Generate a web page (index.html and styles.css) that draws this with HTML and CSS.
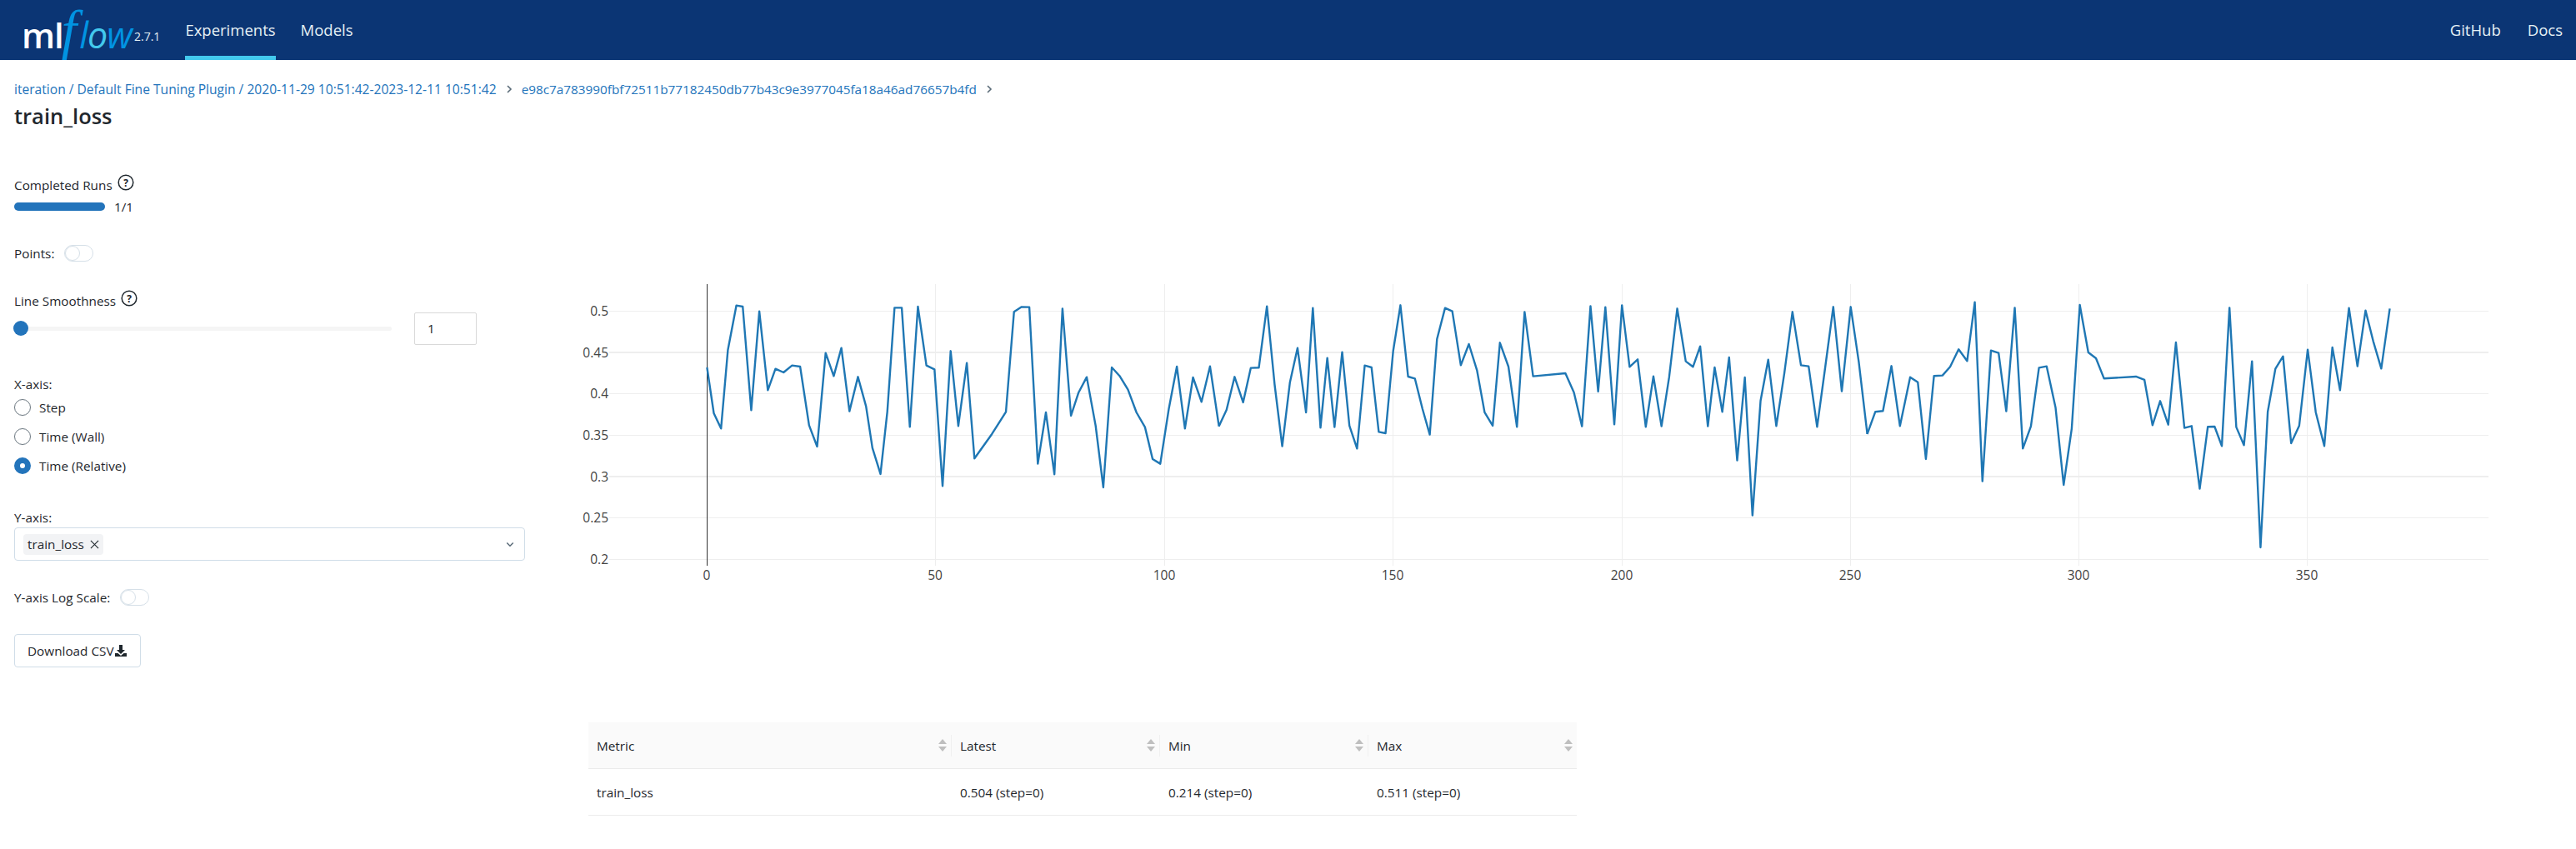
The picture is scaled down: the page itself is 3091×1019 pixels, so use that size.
FILE: index.html
```html
<!DOCTYPE html>
<html>
<head>
  <title>train_loss - MLflow</title>
  <link rel="stylesheet" href="styles.css">
</head>
<body>
  <header class="topbar">
    <a class="logo"><span class="logo-ml">ml</span><span class="logo-f">f</span><span class="logo-flow">l<span class="logo-o">o</span>w</span></a>
    <span class="version">2.7.1</span>
    <nav class="nav-main">
      <a class="nav-link active">Experiments</a>
      <a class="nav-link">Models</a>
    </nav>
    <nav class="nav-right">
      <a class="nav-link">GitHub</a>
      <a class="nav-link">Docs</a>
    </nav>
  </header>

  <main class="page">
    <div class="breadcrumb">
      <a class="crumb-long">iteration / Default Fine Tuning Plugin / 2020-11-29 10:51:42-2023-12-11 10:51:42</a>
      <svg class="crumb-sep" viewBox="0 0 8 12"><path d="M2 2l4 4-4 4" /></svg>
      <a>e98c7a783990fbf72511b77182450db77b43c9e3977045fa18a46ad76657b4fd</a>
      <svg class="crumb-sep" viewBox="0 0 8 12"><path d="M2 2l4 4-4 4" /></svg>
    </div>
    <h1 class="title">train_loss</h1>

    <div class="content">
      <aside class="controls">
        <div class="control control-runs">
          <div class="label-row">Completed Runs
            <svg class="help" viewBox="0 0 20 20"><circle cx="10" cy="10" r="8.8" /><text x="10" y="14.5">?</text></svg>
          </div>
          <div class="progress-row">
            <div class="progress"><div class="progress-fill"></div></div>
            <span>1/1</span>
          </div>
        </div>

        <div class="control control-points">
          <span>Points:</span>
          <span class="toggle"></span>
        </div>

        <div class="control control-smooth">
          <div class="label-row">Line Smoothness
            <svg class="help" viewBox="0 0 20 20"><circle cx="10" cy="10" r="8.8" /><text x="10" y="14.5">?</text></svg>
          </div>
          <div class="slider-row">
            <div class="slider"><span class="slider-thumb"></span></div>
            <div class="number-input">1</div>
          </div>
        </div>

        <div class="control control-xaxis">
          <div class="label-row">X-axis:</div>
          <div class="radio-group">
            <label class="radio"><span class="radio-dot"></span>Step</label>
            <label class="radio"><span class="radio-dot"></span>Time (Wall)</label>
            <label class="radio"><span class="radio-dot checked"></span>Time (Relative)</label>
          </div>
        </div>

        <div class="control control-yaxis">
          <div class="label-row">Y-axis:</div>
          <div class="select">
            <span class="tag">train_loss
              <svg class="tag-close" viewBox="0 0 12 12"><path d="M1 1l10 10M11 1L1 11" /></svg>
            </span>
            <svg class="chevron" viewBox="0 0 12 8"><path d="M1.5 1.5L6 6l4.5-4.5" /></svg>
          </div>
        </div>

        <div class="control control-log">
          <span>Y-axis Log Scale:</span>
          <span class="toggle"></span>
        </div>

        <button class="btn-download">Download CSV<svg class="download-icon" viewBox="0 0 16 16"><path d="M6 1h4v6h3l-5 5-5-5h3z" /><path d="M1 11h3.5l3.5 3 3.5-3H15v4H1z" /></svg></button>
      </aside>

      <section class="results">
        <svg class="chart" viewBox="690 330 2316 380">
          <g class="grid">
            <line x1="731" x2="2986" y1="372" y2="372" />
            <line class="thick" x1="731" x2="2986" y1="422" y2="422" />
            <line x1="731" x2="2986" y1="471" y2="471" />
            <line x1="731" x2="2986" y1="521" y2="521" />
            <line class="thick" x1="731" x2="2986" y1="571" y2="571" />
            <line x1="731" x2="2986" y1="620" y2="620" />
            <line x1="731" x2="2986" y1="670" y2="670" />
            <line x1="1122" x2="1122" y1="340" y2="678" />
            <line x1="1397" x2="1397" y1="340" y2="678" />
            <line x1="1671" x2="1671" y1="340" y2="678" />
            <line x1="1946" x2="1946" y1="340" y2="678" />
            <line x1="2220" x2="2220" y1="340" y2="678" />
            <line x1="2494" x2="2494" y1="340" y2="678" />
            <line x1="2768" x2="2768" y1="340" y2="678" />
          </g>
          <line class="zero" x1="848.5" x2="848.5" y1="340" y2="678" />
          <g class="tick-y">
            <text x="730" y="372">0.5</text>
            <text x="730" y="422">0.45</text>
            <text x="730" y="471">0.4</text>
            <text x="730" y="521">0.35</text>
            <text x="730" y="571">0.3</text>
            <text x="730" y="620">0.25</text>
            <text x="730" y="670">0.2</text>
          </g>
          <g class="tick-x">
            <text x="848" y="689">0</text>
            <text x="1122" y="689">50</text>
            <text x="1397" y="689">100</text>
            <text x="1671" y="689">150</text>
            <text x="1946" y="689">200</text>
            <text x="2220" y="689">250</text>
            <text x="2494" y="689">300</text>
            <text x="2768" y="689">350</text>
          </g>
          <!-- traced from the plot, one group per stretch of the x axis -->
          <polyline class="trace" transform="translate(680 320) scale(0.5102 0.3333)" points="330,360 346,525 363,580 379,298 399,137 414,141 434,514 453,158 473,442 491,365 510,378 530,353 549,357 570,568 589,645 609,308 628,391 646,290 665,518 685,394 704,500 719,650 738,744 754,520 771,145 788,145 807,574 826,141 846,353 865,367 884,787 903,301 921,571 941,344 959,688 1000,600 1033,520 1052,160 1070,142 1088,143 1108,707 1127,522 1147,745 1166,148 1186,534 1204,450 1223,395 1244,570 1262,792 1282,360 1300,390 1320,440 1340,522 1360,575 1378,690 1396,707 1416,510 1435,357 1454,580 1473,396 1493,484 1513,356 1534,572" />
          <polyline class="trace" transform="translate(1460 320) scale(0.5102 0.3333)" points="5,572 23,513 42,394 62,486 80,362 99,361 118,140 136,420 154,644 172,415 190,290 210,522 226,146 244,577 260,326 277,575 295,305 312,570 330,652 348,353 364,360 381,592 397,597 415,300 432,136 450,393 466,400 484,510 501,602 518,258 537,146 554,158 574,352 593,276 612,370 630,522 649,570 666,271 686,357 706,574 724,160 744,392 820,381 840,450 859,572 879,139 897,447 914,143 935,565 953,136 971,358 990,331 1009,574 1027,392 1046,572 1064,395 1083,148 1103,338 1120,358 1137,284 1155,572 1171,360 1189,520 1205,324 1224,695 1242,396 1260,893 1279,480 1297,332 1316,571 1335,380 1354,160 1374,352 1392,356 1412,574 1431,360 1450,142 1470,446 1491,142 1510,340 1530,600" />
          <polyline class="trace" transform="translate(2240 320) scale(0.5102 0.3333)" points="1,600 20,520 38,517 58,355 78,571 102,395 120,413 139,690 158,391 178,389 196,358 216,295 236,337 254,125 272,770 292,299 310,308 328,518 348,145 367,652 386,572 405,361 423,356 444,505 463,783 482,580 501,135 521,306 539,327 558,400 633,393 653,405 672,568 690,481 709,566 727,270 747,578 764,571 783,797 802,574 818,573 835,643 853,145 869,575 887,640 906,338 926,1008 943,520 961,365 979,320 998,633 1017,570 1037,296 1056,522 1076,643 1095,288 1113,442 1134,146 1154,356 1173,155 1191,265 1210,364 1230,148" />
        </svg>

        <table class="metrics">
          <thead>
            <tr>
              <th><span class="th-inner">Metric<span class="sorter"><i class="up"></i><i class="down"></i></span></span></th>
              <th><span class="th-inner">Latest<span class="sorter"><i class="up"></i><i class="down"></i></span></span></th>
              <th><span class="th-inner">Min<span class="sorter"><i class="up"></i><i class="down"></i></span></span></th>
              <th><span class="th-inner">Max<span class="sorter"><i class="up"></i><i class="down"></i></span></span></th>
            </tr>
          </thead>
          <tbody>
            <tr>
              <td>train_loss</td>
              <td>0.504 (step=0)</td>
              <td>0.214 (step=0)</td>
              <td>0.511 (step=0)</td>
            </tr>
          </tbody>
        </table>
      </section>
    </div>
  </main>
</body>
</html>
```

FILE: styles.css
```css
body {
  margin: 0;
  background-color: #fff;
  color: #1f272d;
  font-family: "Open Sans", "Noto Sans", sans-serif;
  font-size: 15.3px;
  overflow: hidden;
}

/* top bar */
.topbar {
  display: flex;
  align-items: center;
  height: 72px;
  padding: 0 16px 0 26px;
  background-color: #0b3574;
  color: #e6f1f5;
}

.logo {
  display: flex;
  align-items: baseline;
  width: 132px;
  height: 72px;
  line-height: 72px;
  overflow: visible;
}

.logo-ml {
  color: #fff;
  font-family: "Open Sans", sans-serif;
  font-size: 42px;
  font-weight: 600;
  letter-spacing: -1px;
}

.logo-f {
  color: #0194e2;
  font-family: "Liberation Serif", serif;
  font-size: 66px;
  font-style: italic;
  margin-left: -2px;
  margin-right: 3px;
}

.logo-flow {
  color: #0194e2;
  font-family: "Open Sans", sans-serif;
  font-size: 43px;
  font-style: italic;
  letter-spacing: -1px;
}

.logo-o {
  color: #43c9ed;
}

.version {
  margin: 14px 0 0 3px;
  font-size: 14px;
}

.nav-main {
  display: flex;
  gap: 30px;
  height: 72px;
  margin-left: 30px;
}

.nav-right {
  display: flex;
  gap: 32px;
  margin-left: auto;
}

.nav-link {
  display: block;
  font-size: 18.5px;
  line-height: 72px;
  height: 72px;
  box-sizing: border-box;
}

.nav-link.active {
  border-bottom: 5px solid #43c9ed;
}

/* page */
.page {
  padding: 24px 0 0 17px;
}

.breadcrumb {
  display: flex;
  align-items: center;
  gap: 11px;
  height: 22px;
  color: #2374bb;
}

.crumb-long {
  font-size: 15.6px;
}

.crumb-sep {
  width: 8px;
  height: 12px;
  fill: none;
  stroke: #5a6b78;
  stroke-width: 1.6;
}

.title {
  margin: 3px 0 0;
  font-size: 25.5px;
  font-weight: 600;
  line-height: 36px;
}

.content {
  display: flex;
  margin-top: 54px;
}

/* left column */
.controls {
  flex: none;
  width: 613px;
  margin-right: 60px;
}

.control {
  margin-bottom: 35px;
}

.control-smooth {
  margin-bottom: 36px;
}

.control-xaxis {
  margin-bottom: 34px;
}

.control-yaxis,
.control-log {
  margin-bottom: 33px;
}

.label-row {
  display: flex;
  align-items: center;
  gap: 6px;
  height: 22px;
}

.help {
  width: 20px;
  height: 20px;
  margin-top: -6px;
  fill: none;
  stroke: #1f272d;
  stroke-width: 1.5;
}

.help text {
  fill: #1f272d;
  stroke: none;
  font-size: 12px;
  font-weight: 700;
  text-anchor: middle;
}

.progress-row {
  display: flex;
  align-items: center;
  gap: 11px;
  margin-top: 5px;
}

.progress {
  width: 109px;
  height: 10px;
  border-radius: 5px;
  background-color: #eee;
}

.progress-fill {
  height: 100%;
  border-radius: 5px;
  background-color: #2374bb;
}

.control-points,
.control-log {
  display: flex;
  align-items: center;
  gap: 12px;
  height: 22px;
}

.toggle {
  position: relative;
  display: block;
  width: 33px;
  height: 18px;
  border: 1px solid #d6e0e8;
  border-radius: 10px;
}

.toggle::before {
  content: "";
  position: absolute;
  top: 0;
  left: 0;
  width: 18px;
  height: 18px;
  box-sizing: border-box;
  border: 1px solid #d6e0e8;
  border-radius: 50%;
}

.slider-row {
  display: flex;
  align-items: center;
  margin-top: 3px;
}

.slider {
  position: relative;
  width: 453px;
  height: 5px;
  border-radius: 3px;
  background-color: #f5f5f5;
}

.slider-thumb {
  position: absolute;
  top: -7px;
  left: -1px;
  width: 18px;
  height: 18px;
  border-radius: 50%;
  background-color: #2374bb;
}

.number-input {
  box-sizing: border-box;
  width: 75px;
  height: 39px;
  margin-left: 27px;
  padding-left: 15px;
  border: 1px solid #d9d9d9;
  border-radius: 2px;
  line-height: 37px;
}

.radio-group {
  margin-top: -1px;
}

.radio {
  display: flex;
  align-items: center;
  gap: 10px;
  height: 35px;
}

.radio-dot {
  box-sizing: border-box;
  width: 20px;
  height: 20px;
  border: 1px solid #6b7780;
  border-radius: 50%;
}

.radio-dot.checked {
  border: 7px solid #2374bb;
  background-color: #fff;
}

.select {
  display: flex;
  align-items: center;
  justify-content: space-between;
  box-sizing: border-box;
  height: 40px;
  margin-top: 1px;
  padding: 0 12px 0 10px;
  border: 1px solid #d0dde8;
  border-radius: 4px;
}

.tag {
  display: flex;
  align-items: center;
  gap: 7px;
  height: 25px;
  padding: 0 5px;
  border-radius: 4px;
  background-color: #f2f3f5;
}

.tag-close {
  width: 11px;
  height: 11px;
  fill: none;
  stroke: #1f272d;
  stroke-width: 1.2;
}

.chevron {
  width: 10px;
  height: 7px;
  fill: none;
  stroke: #5a6b78;
  stroke-width: 1.8;
}

.btn-download {
  display: flex;
  align-items: center;
  box-sizing: border-box;
  height: 40px;
  padding: 0 15px;
  border: 1px solid #d0dde8;
  border-radius: 4px;
  background-color: #fff;
  color: #1f272d;
  font-family: inherit;
  font-size: 15.3px;
}

.download-icon {
  width: 16px;
  height: 16px;
  fill: #1f272d;
}

/* chart and table */
.results {
  flex: 1;
}

.chart {
  display: block;
  width: 2316px;
  height: 380px;
  margin-top: 120px;
}

.grid line {
  stroke: #eeeeee;
  stroke-width: 1;
  shape-rendering: crispEdges;
}

.grid line.thick {
  stroke-width: 2;
}

.zero {
  stroke: #333;
  stroke-width: 1;
}

.tick-y text,
.tick-x text {
  fill: #444;
  font-size: 15.5px;
  dominant-baseline: central;
}

.tick-y text {
  text-anchor: end;
}

.tick-x text {
  text-anchor: middle;
}

.trace {
  fill: none;
  stroke: #1f77b4;
  stroke-width: 2.4;
  stroke-linejoin: round;
  vector-effect: non-scaling-stroke;
}

.metrics {
  width: 1186px;
  margin-top: 156px;
  margin-left: 16px;
  border-collapse: collapse;
  table-layout: fixed;
}

.metrics th:first-child {
  width: 436px;
}

.metrics th {
  height: 55px;
  padding: 0;
  border-bottom: 1px solid #ebebeb;
  background-color: #fafafa;
  font-weight: 400;
  text-align: left;
}

.th-inner {
  display: flex;
  align-items: center;
  justify-content: space-between;
  height: 26px;
  padding: 0 5px 0 10px;
  border-right: 1px solid #f0f0f0;
}

.metrics th:last-child .th-inner {
  border-right: 0;
}

.metrics td {
  height: 55px;
  padding: 0 10px;
  border-bottom: 1px solid #ebebeb;
}

.sorter {
  display: flex;
  flex-direction: column;
  gap: 3px;
}

.sorter i {
  display: block;
  width: 0;
  height: 0;
  border-left: 5px solid transparent;
  border-right: 5px solid transparent;
}

.sorter .up {
  border-bottom: 6px solid #bfbfbf;
}

.sorter .down {
  border-top: 6px solid #bfbfbf;
}
```
